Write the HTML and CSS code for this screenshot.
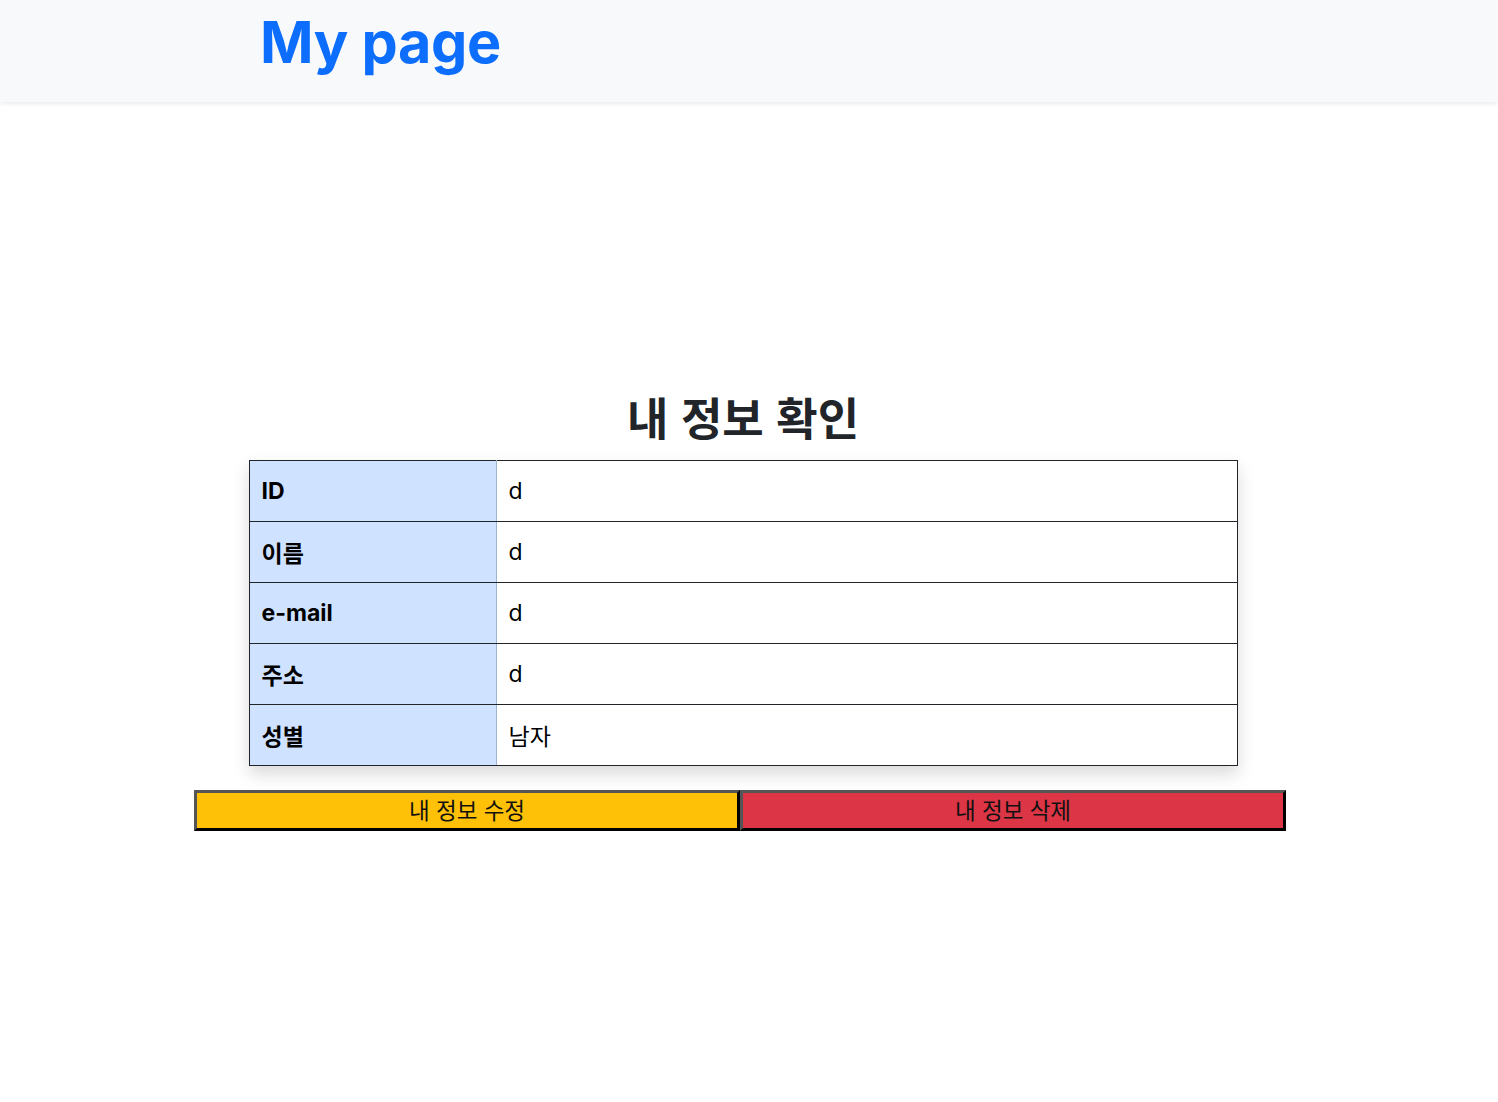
FILE: index.html
```html
<!DOCTYPE html>
<html lang="ko">
<head>
<meta charset="utf-8">
<title>My page</title>
<link rel="stylesheet" href="styles.css">
</head>
<body>
<header class="topbar">
  <a class="brand" href="#">My page</a>
</header>
<main class="page">
  <h1 class="title">내 정보 확인</h1>
  <table class="info">
    <tbody>
      <tr><th>ID</th><td>d</td></tr>
      <tr><th>이름</th><td>d</td></tr>
      <tr><th>e-mail</th><td>d</td></tr>
      <tr><th>주소</th><td>d</td></tr>
      <tr><th>성별</th><td>남자</td></tr>
    </tbody>
  </table>
  <div class="actions">
    <button class="btn btn-edit" type="button">내 정보 수정</button>
    <button class="btn btn-delete" type="button">내 정보 삭제</button>
  </div>
</main>
</body>
</html>
```

FILE: styles.css
```css
* { box-sizing: border-box; }
body {
  margin: 0;
  background: #fff;
  color: #212529;
  font-family: Inter, "Noto Sans CJK KR", sans-serif;
}
.topbar {
  height: 102px;
  background: #f8f9fa;
  box-shadow: 0 2px 4px rgba(0,0,0,.075);
  display: flex;
  align-items: center;
  padding-left: 260px;
}
.brand {
  color: #0d6efd;
  text-decoration: none;
  font-family: Inter, sans-serif;
  font-weight: 700;
  font-size: 57.5px;
  line-height: 1;
  margin-top: -16px;
  letter-spacing: -0.3px;
}
.page {
  padding-right: 12px;
  display: flex;
  flex-direction: column;
  align-items: center;
}
.title {
  margin: 281px 0 9px;
  font-family: "Noto Sans CJK KR", sans-serif;
  font-weight: 700;
  font-size: 45px;
  line-height: 68px;
  color: #212529;
}
.info {
  width: 989px;
  border-collapse: collapse;
  box-shadow: 0 8px 16px rgba(0,0,0,.15);
  font-family: Inter, "Noto Sans CJK KR", sans-serif;
  font-size: 23px;
  color: #000;
}
.info th, .info td {
  height: 61px;
  border: 1px solid #212529;
  padding: 0 12px;
  text-align: left;
  vertical-align: middle;
}
.info th {
  width: 247px;
  background: #cfe2ff;
  font-weight: 700;
  border-right-color: #9fb3cf;
}
.info td { background: #fff; }
.actions {
  display: flex;
  width: 1092px;
  margin-top: 24px;
  margin-right: 6px;
}
.btn {
  flex: 1 1 0;
  height: 41px;
  border-style: solid;
  border-width: 3px;
  border-color: #555 #000 #000 #555;
  font-family: "Noto Sans CJK KR", sans-serif;
  font-size: 22.5px;
  line-height: 1;
  color: #111;
  padding: 0 0 3px;
  cursor: pointer;
}
.btn-edit { background: #ffc107; }
.btn-delete { background: #dc3545; }
```
